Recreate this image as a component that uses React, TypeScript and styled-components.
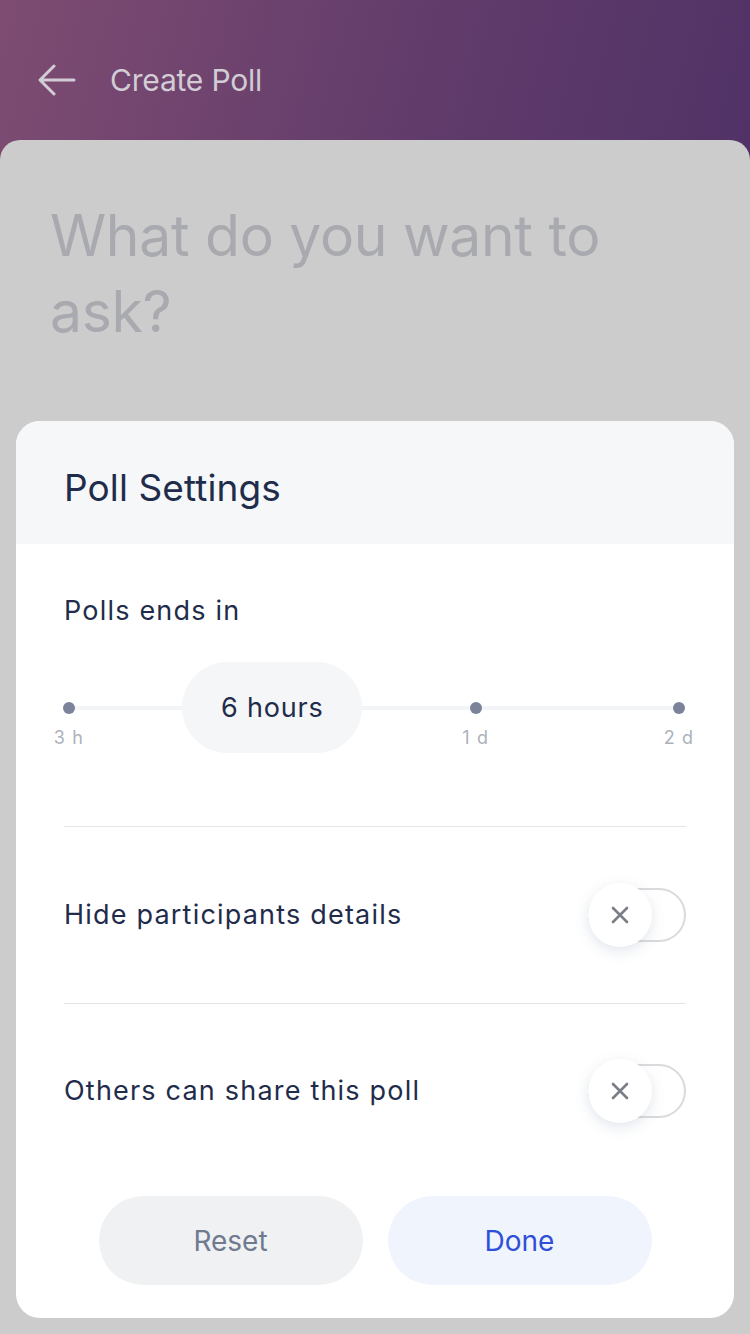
import React from "react";
import styled, { createGlobalStyle } from "styled-components";

const Global = createGlobalStyle`
  html, body { margin: 0; padding: 0; }
  body { font-family: Inter, "Noto Sans", "Liberation Sans", sans-serif; background: #cccccc; }
  * { box-sizing: border-box; }
`;

const Screen = styled.div`
  position: relative;
  width: 750px;
  height: 1334px;
  overflow: hidden;
  display: flex;
  flex-direction: column;
  background: linear-gradient(105deg, #7e4c72 0%, #5e3a6a 45%, #432a63 100%);
`;

const Header = styled.header`
  height: 140px;
  flex: none;
  display: flex;
  align-items: center;
  gap: 34px;
  padding: 20px 0 0 38px;
`;

const Title = styled.h1`
  margin: 0;
  font-size: 30px;
  font-weight: 400;
  color: #d2cdd5;
  letter-spacing: -0.2px;
`;

const Content = styled.main`
  flex: 1;
  background: #cccccc;
  border-radius: 20px 20px 0 0;
  padding: 58px 50px;
`;

const Question = styled.div`
  font-size: 57px;
  line-height: 76px;
  color: #a9aaaf;
  letter-spacing: -0.3px;
  width: 600px;
`;

const Sheet = styled.section`
  position: absolute;
  left: 16px;
  right: 16px;
  bottom: 16px;
  background: #ffffff;
  border-radius: 24px;
  overflow: hidden;
`;

const SheetHeader = styled.div`
  height: 123px;
  background: #f5f7f9;
  display: flex;
  align-items: center;
  padding: 10px 48px 0;
`;

const SheetTitle = styled.h2`
  margin: 0;
  font-size: 37px;
  font-weight: 400;
  color: #1f2c4b;
  letter-spacing: 0.1px;
`;

const Body = styled.div`
  padding: 49px 48px 33px;
  display: flex;
  flex-direction: column;
`;

const Label = styled.div`
  font-size: 27px;
  line-height: 36px;
  color: #1f2c4b;
  letter-spacing: 1.2px;
`;

const Slider = styled.div`
  position: relative;
  height: 91px;
  margin: 33px 1px 0 -1px;
  display: flex;
  justify-content: space-between;
  &::before {
    content: "";
    position: absolute;
    left: 6px;
    right: 6px;
    top: 44px;
    height: 4px;
    background: #f3f4f6;
  }
`;

const Stop = styled.div`
  position: relative;
  width: 12px;
  height: 100%;
`;

const Dot = styled.span`
  position: absolute;
  left: 0;
  top: 40px;
  width: 12px;
  height: 12px;
  border-radius: 50%;
  background: #7a8399;
`;

const StopLabel = styled.span`
  position: absolute;
  top: 64px;
  left: 50%;
  transform: translateX(-50%);
  font-size: 18px;
  line-height: 24px;
  color: #adb1bb;
  letter-spacing: 1.2px;
  white-space: nowrap;
`;

const Pill = styled.span`
  position: absolute;
  top: 0;
  left: 50%;
  transform: translateX(-50%);
  width: 180px;
  height: 91px;
  border-radius: 46px;
  background: #f5f6f8;
  display: flex;
  align-items: center;
  justify-content: center;
  font-size: 27px;
  color: #1f2c4b;
  letter-spacing: 0.8px;
  z-index: 1;
`;

const Divider = styled.hr<{ $top?: number }>`
  margin: ${(p) => p.$top ?? 0}px 0 0;
  border: none;
  height: 1px;
  background: #e3e5e9;
`;

const Row = styled.div<{ $h: number }>`
  height: ${(p) => p.$h}px;
  display: flex;
  align-items: center;
  justify-content: space-between;
`;

const Toggle = styled.div`
  position: relative;
  width: 98px;
  height: 54px;
  border: 2px solid #dadadc;
  border-radius: 27px;
`;

const Knob = styled.div`
  position: absolute;
  left: -2px;
  top: 50%;
  transform: translateY(-50%);
  width: 64px;
  height: 64px;
  border-radius: 50%;
  background: #ffffff;
  box-shadow: 0 4px 14px rgba(120, 140, 170, 0.22);
  display: flex;
  align-items: center;
  justify-content: center;
`;

const Buttons = styled.div`
  margin-top: 18px;
  display: flex;
  justify-content: center;
  gap: 25px;
`;

const Button = styled.button<{ $primary?: boolean }>`
  width: 264px;
  height: 89px;
  border: none;
  border-radius: 45px;
  font-family: inherit;
  font-size: 28px;
  background: ${(p) => (p.$primary ? "#f0f4fd" : "#f0f1f3")};
  color: ${(p) => (p.$primary ? "#2f4fd8" : "#6f7a8f")};
`;

const XIcon = () => (
  <svg width="18" height="18" viewBox="0 0 18 18" fill="none">
    <path d="M2 2L16 16M16 2L2 16" stroke="#7b7e86" strokeWidth="2.6" strokeLinecap="round" />
  </svg>
);

const BackArrow = () => (
  <svg width="38" height="32" viewBox="0 0 38 32" fill="none">
    <path d="M36 16H3M16 2L2 16L16 30" stroke="#d2cdd5" strokeWidth="3" strokeLinecap="round" strokeLinejoin="round" />
  </svg>
);

const stops = [
  { label: "3 h" },
  { label: "", active: "6 hours" },
  { label: "1 d" },
  { label: "2 d" },
];

export default function App() {
  return (
    <>
      <Global />
      <Screen>
        <Header>
          <BackArrow />
          <Title>Create Poll</Title>
        </Header>
        <Content>
          <Question>What do you want to ask?</Question>
        </Content>
        <Sheet>
          <SheetHeader>
            <SheetTitle>Poll Settings</SheetTitle>
          </SheetHeader>
          <Body>
            <Label>Polls ends in</Label>
            <Slider>
              {stops.map((s, i) => (
                <Stop key={i}>
                  <Dot />
                  {s.label && <StopLabel>{s.label}</StopLabel>}
                  {s.active && <Pill>{s.active}</Pill>}
                </Stop>
              ))}
            </Slider>
            <Divider $top={73} />
            <Row $h={176}>
              <Label>Hide participants details</Label>
              <Toggle>
                <Knob>
                  <XIcon />
                </Knob>
              </Toggle>
            </Row>
            <Divider />
            <Row $h={174}>
              <Label>Others can share this poll</Label>
              <Toggle>
                <Knob>
                  <XIcon />
                </Knob>
              </Toggle>
            </Row>
            <Buttons>
              <Button>Reset</Button>
              <Button $primary>Done</Button>
            </Buttons>
          </Body>
        </Sheet>
      </Screen>
    </>
  );
}
